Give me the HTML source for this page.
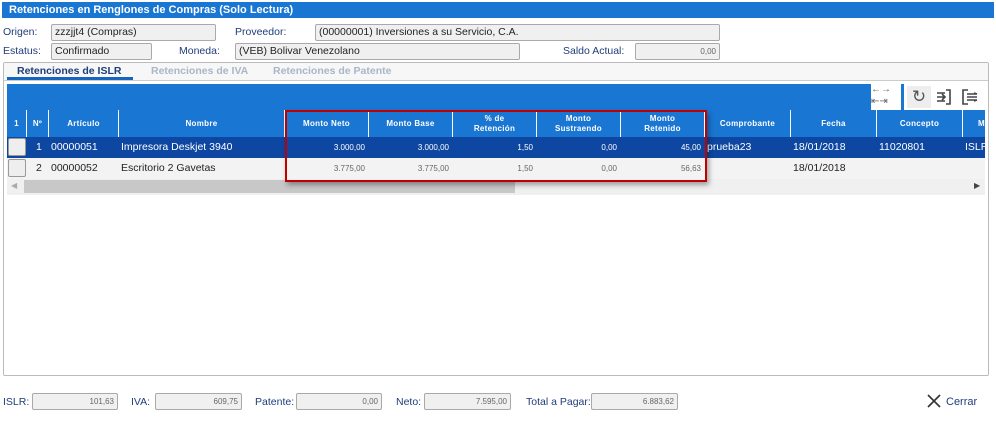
<!DOCTYPE html>
<html><head><meta charset="utf-8"><style>
*{box-sizing:border-box;margin:0;padding:0}
body{width:996px;height:432px;background:#fff;font-family:"Liberation Sans",Verdana,sans-serif;position:relative;overflow:hidden;font-size:11px;color:#222}
.a{position:absolute}
.lbl{position:absolute;color:#1f3d7a;font-size:10.5px}
.inp{position:absolute;background:#f0f0f0;border:1px solid #a9a9a9;border-radius:2px;font-size:10.5px;padding-left:3px;line-height:15px;color:#222;height:17px}
.inp.r{text-align:right;padding-right:3px;font-size:8px;color:#666}
.h{position:absolute;top:110px;height:27px;background:#1976d2;color:#fff;font-weight:bold;font-size:8px;text-align:center;display:flex;align-items:center;justify-content:center;border-right:1px solid #fff;line-height:10px;letter-spacing:.3px}
.c{position:absolute;font-size:10.5px;line-height:21px;height:21px;white-space:nowrap}
.n{text-align:right;font-size:8px;padding-right:4px}
</style></head><body>
<div class="a" style="left:2px;top:2px;width:992px;height:16px;background:#1976d2;color:#fff;font-weight:bold;font-size:11px;line-height:16px;padding-left:7px">Retenciones en Renglones de Compras (Solo Lectura)</div>
<div class="lbl" style="left:3px;top:26px">Origen:</div>
<div class="inp" style="left:51px;top:24px;width:165px">zzzjjt4 (Compras)</div>
<div class="lbl" style="left:235px;top:26px">Proveedor:</div>
<div class="inp" style="left:315px;top:24px;width:405px">(00000001) Inversiones a su Servicio, C.A.</div>
<div class="lbl" style="left:3px;top:45px">Estatus:</div>
<div class="inp" style="left:51px;top:43px;width:101px">Confirmado</div>
<div class="lbl" style="left:179px;top:45px">Moneda:</div>
<div class="inp" style="left:235px;top:43px;width:285px">(VEB) Bolivar Venezolano</div>
<div class="lbl" style="left:563px;top:45px">Saldo Actual:</div>
<div class="inp r" style="left:635px;top:43px;width:85px">0,00</div>
<div class="a" style="left:3px;top:62px;width:986px;height:314px;border:1px solid #bbb;border-radius:2px"></div>
<div class="a" style="left:4px;top:63px;width:984px;height:18px;background:#f7f7f7;border-bottom:1px solid #ccc"></div>
<div class="a" style="left:17px;top:65px;font-weight:bold;color:#1f3d7a;font-size:10.5px">Retenciones de ISLR</div>
<div class="a" style="left:7px;top:77px;width:126px;height:3px;background:#1565c0"></div>
<div class="a" style="left:151px;top:65px;font-weight:bold;color:#a9b6c8;font-size:10.5px">Retenciones de IVA</div>
<div class="a" style="left:273px;top:65px;font-weight:bold;color:#a9b6c8;font-size:10.5px">Retenciones de Patente</div>
<div class="a" style="left:7px;top:84px;width:864px;height:26px;background:#1976d2"></div>
<div class="a" style="left:871px;top:84px;color:#666;font-size:10px;line-height:12px">←→<br>⇤⇥</div>
<div class="a" style="left:901px;top:84px;width:3px;height:26px;background:#1976d2"></div>
<div class="a" style="left:907px;top:86px;width:24px;height:22px;background:#eee;color:#555;font-size:17px;text-align:center;line-height:22px">↻</div>
<svg class="a" style="left:934px;top:88px" width="50" height="18"><g fill="none" stroke="#444" stroke-width="1.6"><path d="M3 5h8M3 9h8M3 13h8M8 6l3 3-3 3M12 2h4v14h-4"/><path d="M34 2h-5v14h5M33 6h10M33 9h10M33 12h10M40 5l3 1M40 13l3-1"/></g></svg>
<div class="h" style="left:7px;width:20px">1</div>
<div class="h" style="left:27px;width:22px">Nº</div>
<div class="h" style="left:49px;width:70px">Artículo</div>
<div class="h" style="left:119px;width:166px">Nombre</div>
<div class="h" style="left:285px;width:84px">Monto Neto</div>
<div class="h" style="left:369px;width:84px">Monto Base</div>
<div class="h" style="left:453px;width:84px">% de<br>Retención</div>
<div class="h" style="left:537px;width:84px">Monto<br>Sustraendo</div>
<div class="h" style="left:621px;width:84px">Monto<br>Retenido</div>
<div class="h" style="left:705px;width:86px">Comprobante</div>
<div class="h" style="left:791px;width:86px">Fecha</div>
<div class="h" style="left:877px;width:86px">Concepto</div>
<div class="h" style="left:963px;width:22px;border:0;justify-content:flex-end">M</div>
<div class="a" style="left:7px;top:137px;width:978px;height:21px;background:#0d47a1"></div>
<div class="a" style="left:7px;top:158px;width:978px;height:21px;background:#f3f3f3"></div>
<div class="a" style="left:8px;top:138px;width:18px;height:18px;background:#eee;border:1px solid #999;border-radius:2px"></div>
<div class="a" style="left:8px;top:159px;width:18px;height:18px;background:#eee;border:1px solid #999;border-radius:2px"></div>
<div style="color:#fff">
<div class="c" style="left:36px;top:137px">1</div><div class="c" style="left:51px;top:137px">00000051</div><div class="c" style="left:121px;top:137px">Impresora Deskjet 3940</div>
<div class="c n" style="left:285px;width:84px;top:137px">3.000,00</div><div class="c n" style="left:369px;width:84px;top:137px">3.000,00</div><div class="c n" style="left:453px;width:84px;top:137px">1,50</div><div class="c n" style="left:537px;width:84px;top:137px">0,00</div><div class="c n" style="left:621px;width:84px;top:137px">45,00</div>
<div class="c" style="left:707px;top:137px">prueba23</div><div class="c" style="left:793px;top:137px">18/01/2018</div><div class="c" style="left:879px;top:137px">11020801</div><div class="c" style="left:965px;top:137px">ISLR</div>
</div>
<div>
<div class="c" style="left:36px;top:158px">2</div><div class="c" style="left:51px;top:158px">00000052</div><div class="c" style="left:121px;top:158px">Escritorio 2 Gavetas</div>
<div class="c n" style="left:285px;width:84px;top:158px;color:#666">3.775,00</div><div class="c n" style="left:369px;width:84px;top:158px;color:#666">3.775,00</div><div class="c n" style="left:453px;width:84px;top:158px;color:#666">1,50</div><div class="c n" style="left:537px;width:84px;top:158px;color:#666">0,00</div><div class="c n" style="left:621px;width:84px;top:158px;color:#666">56,63</div>
<div class="c" style="left:793px;top:158px">18/01/2018</div>
</div>
<div class="a" style="left:7px;top:179px;width:978px;height:16px;background:#f0f0f0"></div>
<div class="a" style="left:24px;top:180px;width:491px;height:13px;background:#c8c8c8"></div>
<div class="a" style="left:11px;top:181px;font-size:8px;color:#aaa">◀</div>
<div class="a" style="left:974px;top:181px;font-size:8px;color:#444">▶</div>
<div class="a" style="left:285px;top:110px;width:422px;height:72px;border:2px solid #c00000;box-shadow:2px 3px 5px rgba(0,0,0,.35)"></div>
<div class="lbl" style="left:3px;top:396px">ISLR:</div>
<div class="inp r" style="left:32px;top:393px;width:86px">101,63</div>
<div class="lbl" style="left:131px;top:396px">IVA:</div>
<div class="inp r" style="left:155px;top:393px;width:87px">609,75</div>
<div class="lbl" style="left:255px;top:396px">Patente:</div>
<div class="inp r" style="left:296px;top:393px;width:86px">0,00</div>
<div class="lbl" style="left:396px;top:396px">Neto:</div>
<div class="inp r" style="left:424px;top:393px;width:87px">7.595,00</div>
<div class="lbl" style="left:526px;top:396px">Total a Pagar:</div>
<div class="inp r" style="left:591px;top:393px;width:87px">6.883,62</div>
<svg class="a" style="left:927px;top:394px" width="14" height="14"><path d="M1 1L13 13M13 1L1 13" stroke="#333" stroke-width="1.6"/></svg>
<div class="lbl" style="left:946px;top:396px;font-size:11px">Cerrar</div>
</body></html>
